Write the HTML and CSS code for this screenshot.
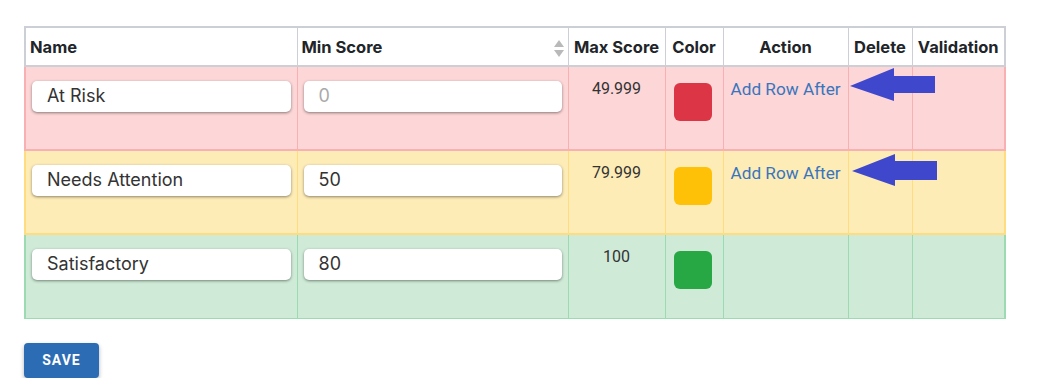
FILE: index.html
```html
<!DOCTYPE html>
<html>
<head>
<meta charset="utf-8">
<link rel="stylesheet" href="styles.css">
</head>
<body>
<div class="page">
  <table class="grid">
    <colgroup>
      <col class="c-name"><col class="c-min"><col class="c-max"><col class="c-color"><col class="c-action"><col class="c-del"><col class="c-val">
    </colgroup>
    <thead>
      <tr>
        <th class="left">Name</th>
        <th class="left sortable">Min Score
          <svg class="sort" width="10" height="20" viewBox="0 0 10 20"><path d="M5 2 L10 9 L0 9 Z" fill="#b9b9b9"/><path d="M5 19 L10 12 L0 12 Z" fill="#b9b9b9"/></svg>
        </th>
        <th>Max Score</th>
        <th>Color</th>
        <th>Action</th>
        <th>Delete</th>
        <th>Validation</th>
      </tr>
    </thead>
    <tbody>
      <tr class="risk">
        <td><div class="field">At Risk</div></td>
        <td><div class="field placeholder">0</div></td>
        <td class="num">49.999</td>
        <td class="sw"><div class="swatch red"></div></td>
        <td class="act"><a class="link">Add Row After</a>
          <svg class="arrow" width="86" height="34" viewBox="0 0 86 34"><path d="M0 18 L44 0 L44 8 L85 8 L85 25 L44 25 L44 33 Z" fill="#3f48cc"/></svg>
        </td>
        <td></td>
        <td></td>
      </tr>
      <tr class="attn">
        <td><div class="field">Needs Attention</div></td>
        <td><div class="field">50</div></td>
        <td class="num">79.999</td>
        <td class="sw"><div class="swatch yellow"></div></td>
        <td class="act"><a class="link">Add Row After</a>
          <svg class="arrow a2" width="86" height="34" viewBox="0 0 86 34"><path d="M0 17 L43 0 L43 7 L85 7 L85 26 L43 26 L43 32 Z" fill="#3f48cc"/></svg>
        </td>
        <td></td>
        <td></td>
      </tr>
      <tr class="ok">
        <td><div class="field">Satisfactory</div></td>
        <td><div class="field">80</div></td>
        <td class="num">100</td>
        <td class="sw"><div class="swatch green"></div></td>
        <td></td>
        <td></td>
        <td></td>
      </tr>
    </tbody>
  </table>
  <button class="save">SAVE</button>
</div>
</body>
</html>
```

FILE: styles.css
```css
html, body {
  margin: 0;
  background: #fff;
  font-family: Roboto, "Liberation Sans", sans-serif;
  color: #212529;
}
.page {
  padding: 26px 24px 0 24px;
}
.grid {
  border-collapse: collapse;
  width: 980px;
  table-layout: fixed;
}
.c-name { width: 272px; }
.c-min { width: 271px; }
.c-max { width: 97px; }
.c-color { width: 58px; }
.c-action { width: 125px; }
.c-del { width: 64px; }
.c-val { width: 93px; }

.grid th {
  height: 37px;
  padding: 0 4px;
  font-family: Inter, Roboto, sans-serif;
  font-size: 16.5px;
  font-weight: 700;
  text-align: center;
  white-space: nowrap;
  border: 1px solid #ccd0d6;
  border-top: 2px solid #ccd0d6;
  border-bottom: 2px solid #ccd0d6;
  color: #212529;
}
.grid th:first-child { border-left: 2px solid #ccd0d6; }
.grid th:last-child { border-right: 2px solid #ccd0d6; }
.grid th.left { text-align: left; }
.grid th.sortable { position: relative; }
.sort { position: absolute; right: 4px; top: 10px; }

.grid td {
  height: 84px;
  padding: 12px 6px 0 6px;
  vertical-align: top;
  box-sizing: border-box;
}
.grid tr.risk td { background: #fdd6d7; border: 1px solid #f8b0b3; }
.grid tr.attn td { background: #feecb7; border: 1px solid #fedc7f; }
.grid tr.ok td { background: #cfebd8; border: 1px solid #9cdab2; }
.grid tr.risk td { border-bottom: 2px solid #f8b0b3; }
.grid tr.attn td { border-bottom: 2px solid #fedc7f; }
.grid tr td:first-child { border-left-width: 2px; }
.grid tr td:last-child { border-right-width: 2px; }

.field {
  height: 31px;
  margin: 2px 0 0 0;
  background: #fff;
  border-radius: 5px;
  box-shadow: 0 1px 3px rgba(0,0,0,0.45);
  box-sizing: border-box;
  padding: 4px 0 0 15px;
  font-family: Inter, Roboto, sans-serif;
  font-size: 18px;
  line-height: 22px;
  color: #333;
}
.field.placeholder { color: #a9a9a9; }

.grid td.num {
  text-align: center;
  font-size: 16px;
  line-height: 20px;
  color: #333;
}
.grid td.sw { padding: 16px 0 0 8px; }
.swatch {
  width: 38px;
  height: 38px;
  border-radius: 6px;
}
.swatch.red { background: #dc3545; }
.swatch.yellow { background: #ffc107; }
.swatch.green { background: #28a745; }

.grid td.act {
  position: relative;
  padding-left: 7px;
  white-space: nowrap;
}
.link {
  font-size: 17.2px;
  line-height: 20px;
  color: #3875bd;
}
.arrow {
  position: absolute;
  left: 126px;
  top: 1px;
}
.arrow.a2 { left: 128px; top: 3px; }

.save {
  display: block;
  margin-top: 24px;
  width: 75px;
  height: 35px;
  border: none;
  border-radius: 4px;
  background: #2b6cb5;
  color: #fff;
  font-family: Roboto, "Liberation Sans", sans-serif;
  font-weight: 700;
  font-size: 14px;
  letter-spacing: 1px;
  box-shadow: 0 2px 4px rgba(0,0,0,0.3);
}
```
